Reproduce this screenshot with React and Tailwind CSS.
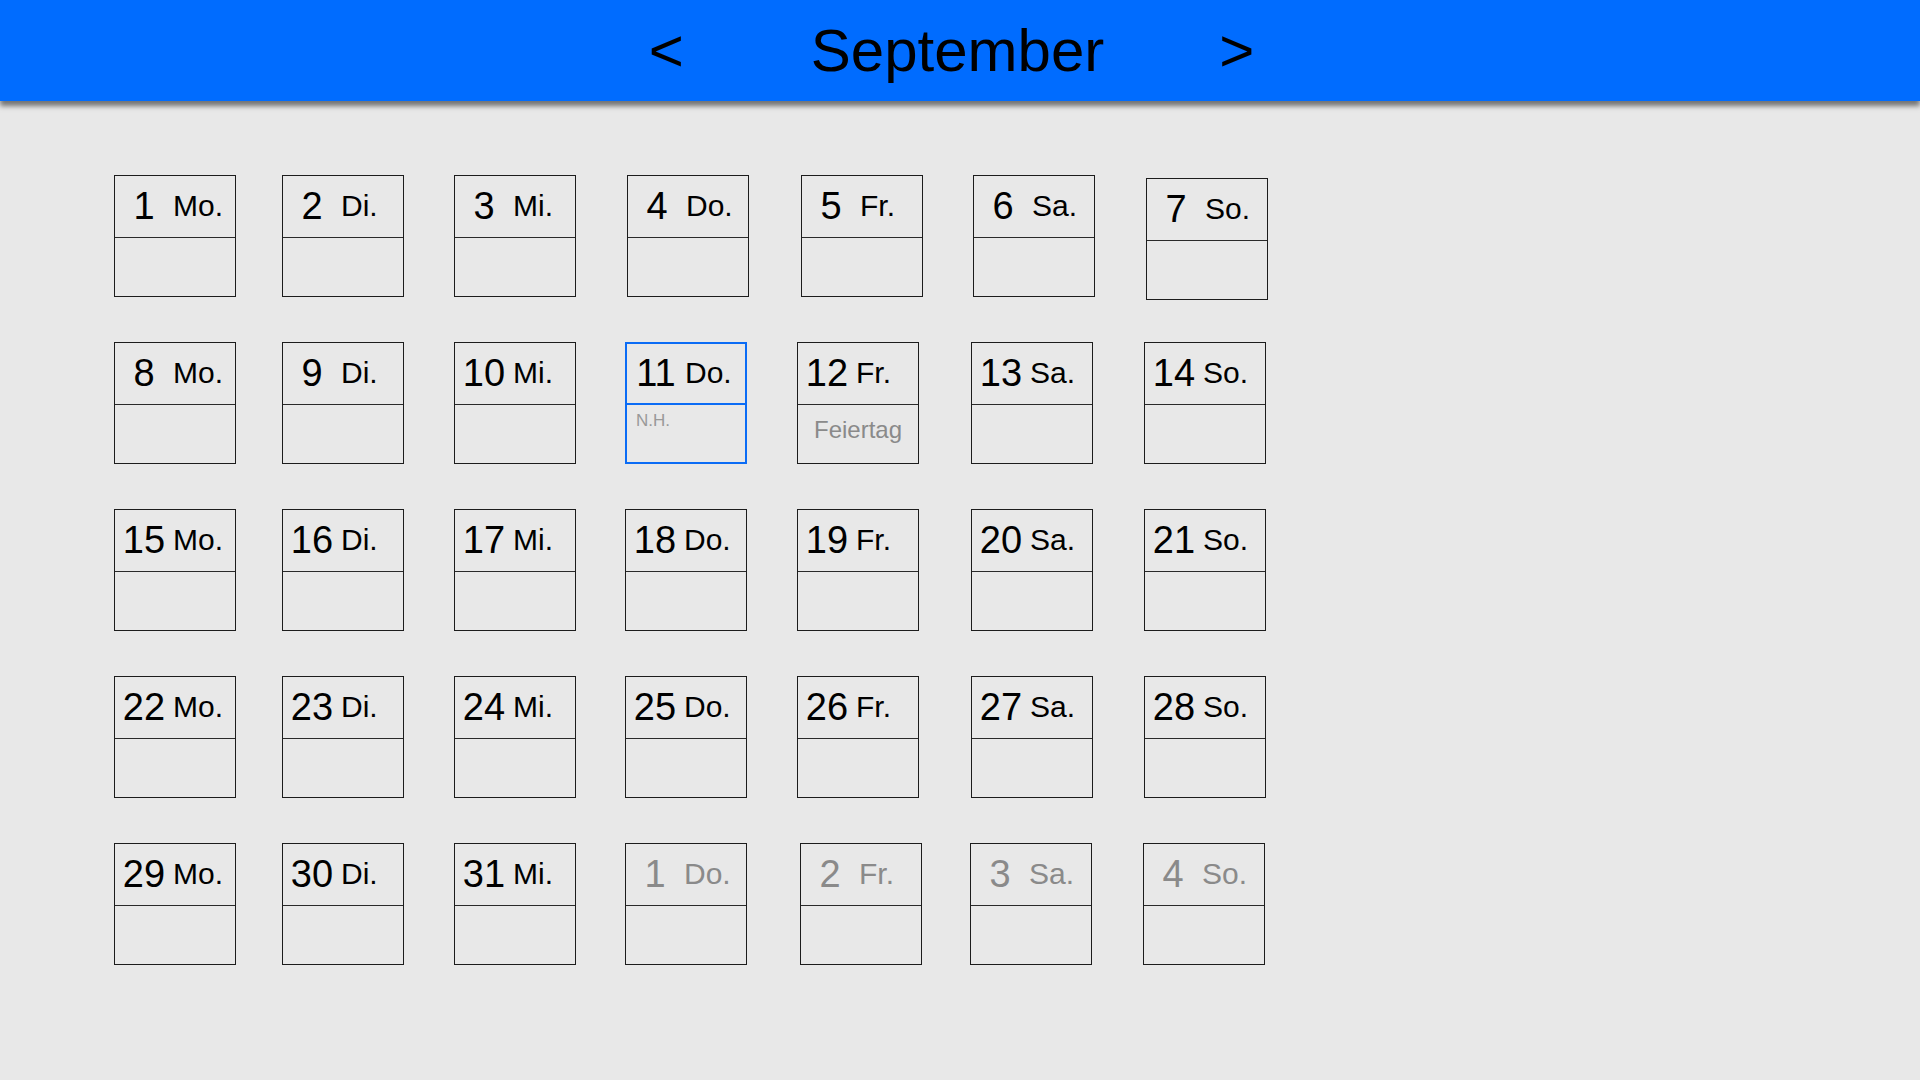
import React from 'react';
import clsx from 'clsx';

const dayNames = ['Mo.', 'Di.', 'Mi.', 'Do.', 'Fr.', 'Sa.', 'So.'];

// column tracks per week row (the reference is not perfectly regular)
const rowCols = [
  'grid-cols-[168px_172px_173px_174px_172px_173px_122px]',
  'grid-cols-[168px_172px_171px_172px_174px_173px_122px]',
  'grid-cols-[168px_172px_171px_172px_174px_173px_122px]',
  'grid-cols-[168px_172px_171px_172px_174px_173px_122px]',
  'grid-cols-[168px_172px_171px_175px_170px_173px_122px]',
];

const buildWeeks = () => {
  const days = [];
  for (let i = 1; i <= 31; i++) {
    days.push({ d: i, w: dayNames[(i - 1) % 7] });
  }
  for (let i = 1; i <= 4; i++) {
    days.push({ d: i, w: dayNames[(30 + i) % 7], muted: true });
  }
  days[10].active = true;
  days[10].note = 'N.H.';
  days[11].holiday = 'Feiertag';
  const weeks = [];
  for (let i = 0; i < days.length; i += 7) weeks.push(days.slice(i, i + 7));
  return weeks;
};

const DayCell = ({ day, shift }) => (
  <div
    className={clsx(
      'w-[122px] h-[122px] flex flex-col',
      day.active ? 'border-2 border-[#0b6cf5]' : 'border border-[#1c1c1c]',
      shift && 'mt-[3px] -mb-[3px]'
    )}
  >
    <div
      className={clsx(
        'flex items-center shrink-0',
        day.active ? 'border-b-2 border-[#0b6cf5] h-[61px]' : 'border-b border-[#2a2a2a] h-[62px]',
        day.muted ? 'text-[#8a8a8a]' : 'text-black'
      )}
    >
      <span className="w-[58px] text-center text-[38px] leading-[1.15]">{day.d}</span>
      <span className="text-[30px] leading-[1.15]">{day.w}</span>
    </div>
    <div className="flex-1 relative">
      {day.note && (
        <span className="absolute left-[9px] top-[3px] text-[17px] text-[#999999]">{day.note}</span>
      )}
      {day.holiday && (
        <div className="pt-[11px] text-center text-[24px] leading-[1.15] text-[#8a8a8a]">{day.holiday}</div>
      )}
    </div>
  </div>
);

const App = () => {
  const weeks = buildWeeks();

  return (
    <div
      className="min-h-[1080px] w-full bg-[#e8e8e8]"
      style={{ fontFamily: '"Liberation Sans", Arial, sans-serif' }}
    >
      <div className="h-[101px] bg-[#006cff] flex items-center justify-center pr-[17px] shadow-[0_5px_5px_rgba(0,0,0,0.5)] relative">
        <span className="text-[60px] leading-[60px] text-black">&lt;</span>
        <span className="text-[60px] leading-[60px] text-black ml-[127px] mr-[115px]">September</span>
        <span className="text-[60px] leading-[60px] text-black">&gt;</span>
      </div>

      <div className="pt-[74px] pl-[114px] flex flex-col gap-y-[45px]">
        {weeks.map((week, wi) => (
          <div key={wi} className={clsx('grid items-start', rowCols[wi])}>
            {week.map((day, di) => (
              <DayCell key={di} day={day} shift={wi === 0 && di === 6} />
            ))}
          </div>
        ))}
      </div>
    </div>
  );
};

export default App;
